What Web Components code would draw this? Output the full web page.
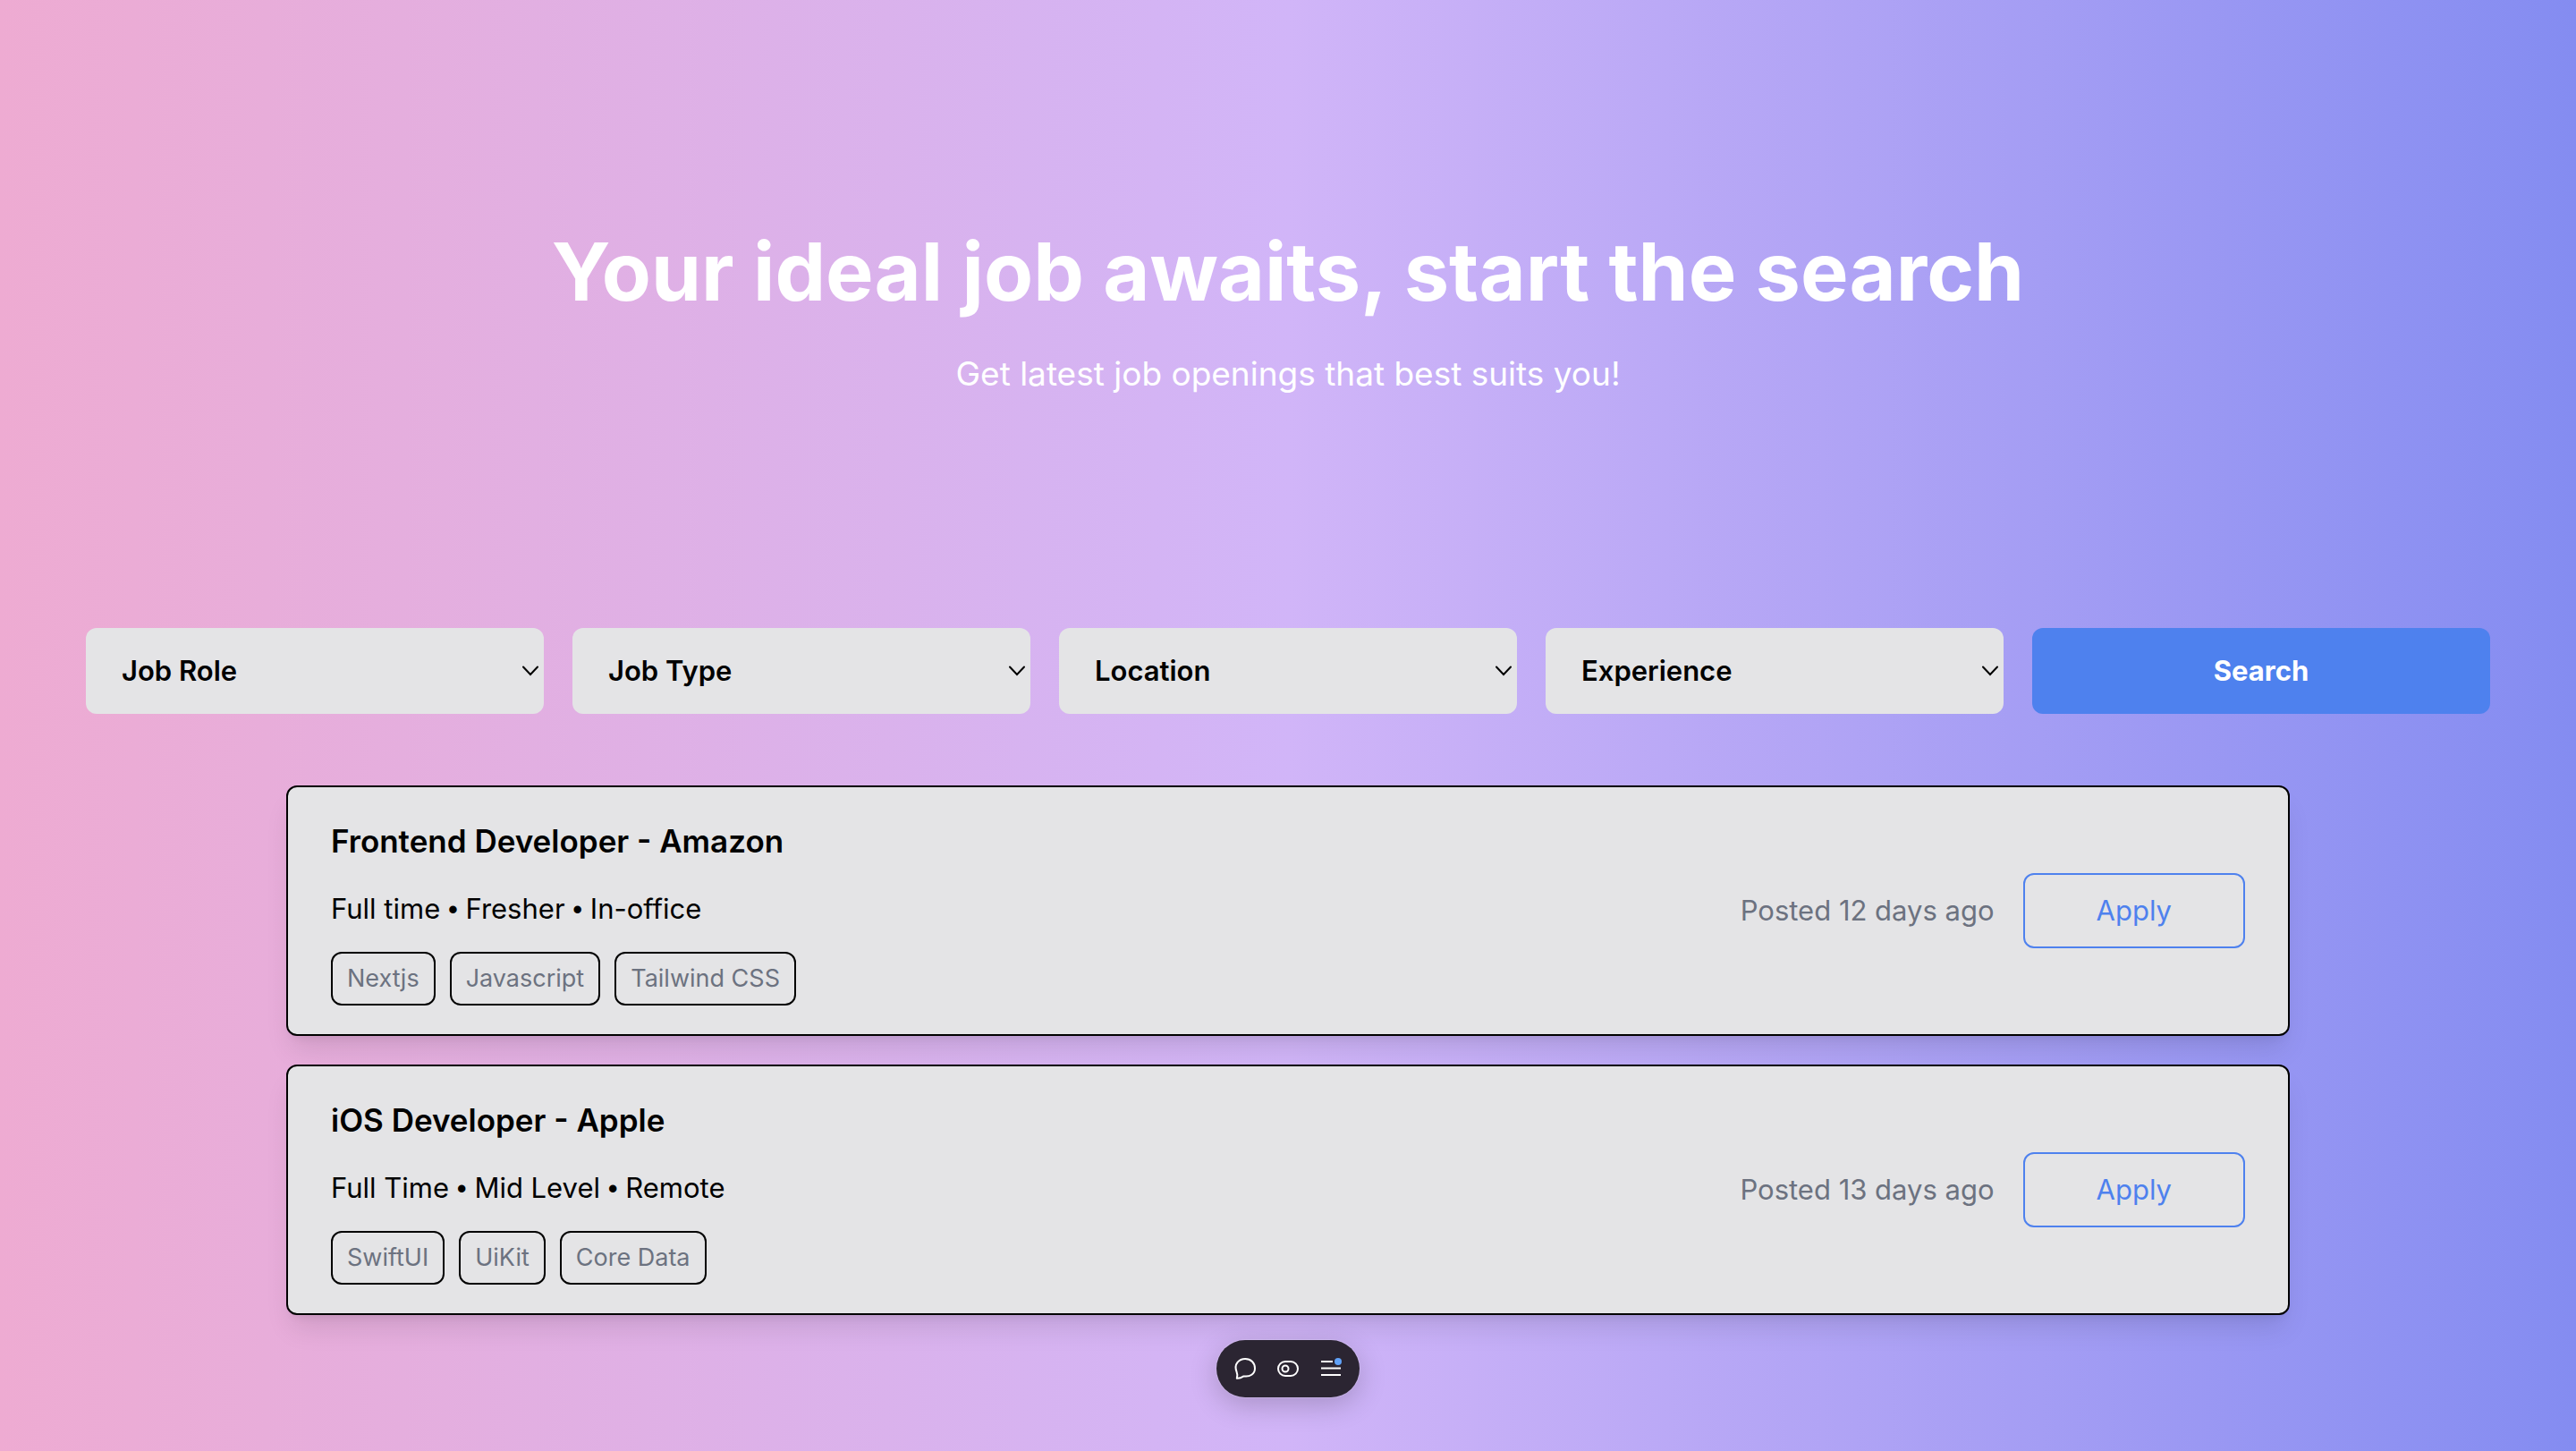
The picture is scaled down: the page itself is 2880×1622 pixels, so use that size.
<!DOCTYPE html>
<html lang="en">
<head>
<meta charset="utf-8">
<title>Job search</title>
<style>
  html, body { margin: 0; min-height: 100%; }
  body { font-family: Inter, "Liberation Sans", sans-serif; color: #000; }
</style>
</head>
<body>
<job-board></job-board>

<script>
const define = (name, html, setup) => customElements.define(name, class extends HTMLElement {
  constructor() {
    super();
    const template = document.createElement('template');
    template.innerHTML = '<style>*{box-sizing:border-box}</style>' + html;
    this.attachShadow({ mode: 'open' }).append(template.content.cloneNode(true));
  }
  connectedCallback() { if (setup) setup(this, this.shadowRoot); }
});

define('hero-banner', `
  <style>
    :host { display: flex; flex-direction: column; align-items: center; gap: 38px; color: #fff; text-align: center; }
    h1 { margin: 0; font-size: 90px; line-height: 96px; font-weight: 700; }
    p { margin: 0; font-size: 37px; line-height: 56px; }
  </style>
  <h1><slot name="title"></slot></h1>
  <p><slot></slot></p>`);

define('filter-select', `
  <style>
    :host { display: block; min-width: 0; }
    label { display: grid; align-items: center; }
    select, svg { grid-area: 1 / 1; }
    select { appearance: none; width: 100%; height: 96px; margin: 0; padding: 0 40px; border: 0; border-radius: 12px;
      background: #e4e4e6; color: #000; font: 600 31px/48px Inter, "Liberation Sans", sans-serif; }
    svg { justify-self: end; margin-right: 6px; pointer-events: none; }
  </style>
  <label>
    <select><option></option></select>
    <svg width="18" height="12" viewBox="0 0 18 12" fill="none" stroke="#000" stroke-width="2" stroke-linecap="round"><path d="M1 1.5 9 10l8-8.5"/></svg>
  </label>`, (host, root) => {
    const name = host.getAttribute('name');
    root.querySelector('option').textContent = name;
    root.querySelector('select').setAttribute('aria-label', name);
  });

define('filter-bar', `
  <style>
    :host { display: grid; grid-template-columns: repeat(5, 1fr); gap: 32px; }
    button { height: 96px; border: 0; border-radius: 12px; background: #4e81ee; color: #fff;
      font: 700 31px/48px Inter, "Liberation Sans", sans-serif; }
  </style>
  <filter-select name="Job Role"></filter-select>
  <filter-select name="Job Type"></filter-select>
  <filter-select name="Location"></filter-select>
  <filter-select name="Experience"></filter-select>
  <button type="button">Search</button>`);

define('skill-tag', `
  <style>
    :host { display: block; box-sizing: border-box; padding: 8px 16px; border: 2px solid #000; border-radius: 12px;
      color: #6c7280; font-size: 27px; line-height: 40px; }
  </style>
  <slot></slot>`);

define('job-card', `
  <style>
    :host { display: flex; align-items: center; justify-content: space-between; box-sizing: border-box;
      padding: 32px 48px; border: 2px solid #000; border-radius: 12px; background: #e4e4e6;
      box-shadow: 0 20px 30px -6px rgb(0 0 0 / .1), 0 8px 12px -8px rgb(0 0 0 / .1); }
    .info { display: flex; flex-direction: column; gap: 24px; }
    h2 { margin: 0; font-size: 35px; line-height: 56px; font-weight: 600; }
    p { margin: 0; height: 48px; font-size: 31px; line-height: 48px; }
    .tags { display: flex; gap: 16px; }
    .action { display: flex; align-items: center; gap: 32px; }
    .posted { color: #6c7280; }
    button { padding: 16px 80px; border: 2px solid #4e81ee; border-radius: 12px; background: none; color: #4e81ee;
      font: 400 31px/48px Inter, "Liberation Sans", sans-serif; }
  </style>
  <div class="info">
    <h2><slot name="title"></slot></h2>
    <p><slot name="meta"></slot></p>
    <div class="tags"><slot></slot></div>
  </div>
  <div class="action">
    <p class="posted"><slot name="posted"></slot></p>
    <button type="button">Apply</button>
  </div>`);

define('floating-toolbar', `
  <style>
    :host { position: fixed; bottom: 60px; left: 50%; transform: translateX(-50%); display: flex; padding: 8px;
      border-radius: 32px; background: #2b2532; box-shadow: 0 0 0 1px rgb(255 255 255 / .15), 0 8px 32px rgb(0 0 0 / .2); }
    button { display: grid; place-items: center; width: 48px; height: 48px; padding: 0; border: 0; background: none; }
    svg { display: block; }
  </style>
  <button type="button" aria-label="Comments">
    <svg width="32" height="32" viewBox="0 0 32 32" fill="none" stroke="#fff" stroke-width="2" stroke-linejoin="round"><path d="M6.8 26.8C7.8 24 7.6 22 6.6 19.6 3 10.5 9.500 5 16.200 5 22.500 5 27 9.500 27 15.500 27 22 21.500 25.500 14.500 24.400 12 26 9.500 27 6.800 26.800Z"/></svg>
  </button>
  <button type="button" aria-label="Draft mode">
    <svg width="32" height="32" viewBox="0 0 32 32" fill="none" stroke="#fff" stroke-width="2"><rect x="5" y="8" width="22" height="16" rx="8"/><circle cx="13" cy="16" r="3.5"/></svg>
  </button>
  <button type="button" aria-label="Menu">
    <svg width="32" height="32" viewBox="0 0 32 32" fill="none" stroke="#fff" stroke-width="2"><path d="M5 8h13M5 15.5h22M5 23h22"/><circle cx="24" cy="8" r="4" fill="#60a2f8" stroke="none"/></svg>
  </button>`);

define('job-board', `
  <style>
    :host { display: flex; flex-direction: column; box-sizing: border-box; min-height: 100vh; padding: 256px 96px 152px;
      background: linear-gradient(to right, #eeabd2, #d1b5f8, #848cf1); }
    hero-banner { margin-bottom: 256px; }
    .list { display: flex; flex-direction: column; gap: 32px; width: 100%; max-width: 2240px; margin: 80px auto 0; }
    .dot { font-family: "Liberation Sans", sans-serif; }
  </style>
  <hero-banner><span slot="title">Your ideal job awaits, start the search</span>Get latest job openings that best suits you!</hero-banner>
  <filter-bar></filter-bar>
  <div class="list">
    <job-card>
      <span slot="title">Frontend Developer - Amazon</span>
      <span slot="meta">Full time <span class="dot">•</span> Fresher <span class="dot">•</span> In-office</span>
      <skill-tag>Nextjs</skill-tag><skill-tag>Javascript</skill-tag><skill-tag>Tailwind CSS</skill-tag>
      <span slot="posted">Posted 12 days ago</span>
    </job-card>
    <job-card>
      <span slot="title">iOS Developer - Apple</span>
      <span slot="meta">Full Time <span class="dot">•</span> Mid Level <span class="dot">•</span> Remote</span>
      <skill-tag>SwiftUI</skill-tag><skill-tag>UiKit</skill-tag><skill-tag>Core Data</skill-tag>
      <span slot="posted">Posted 13 days ago</span>
    </job-card>
  </div>
  <floating-toolbar></floating-toolbar>`);
</script>
</body>
</html>
